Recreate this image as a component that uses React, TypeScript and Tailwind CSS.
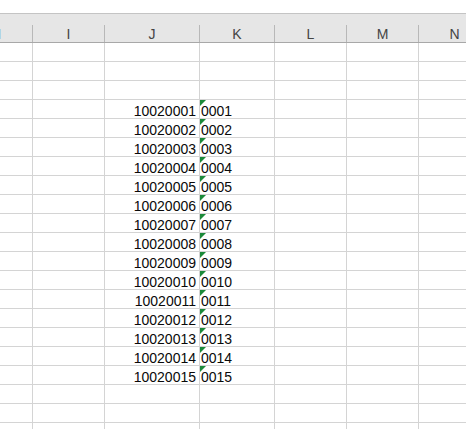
const COLS = [
  { key: 'H', w: 'w-[33px]' },
  { key: 'I', w: 'w-[72px]' },
  { key: 'J', w: 'w-[95px]' },
  { key: 'K', w: 'w-[75px]' },
  { key: 'L', w: 'w-[72px]' },
  { key: 'M', w: 'w-[72px]' },
  { key: 'N', w: 'w-[72px]' },
];

const ROW_COUNT = 21;
const DATA_START = 3;

function GreenFlag() {
  return (
    <svg width="6" height="6" viewBox="0 0 6 6" className="absolute left-0 top-0">
      <polygon points="0,0 6,0 0,6" fill="#1b8a3a" />
    </svg>
  );
}

function HeaderCell({ label, w, first }: { label: string; w: string; first?: boolean }) {
  return (
    <div className={`${w} shrink-0 h-full flex items-end overflow-hidden`}>
      <div
        className={`flex-1 leading-[14px] pb-[1px] text-[14px] text-[#444] ${first ? 'text-left -ml-[9px]' : 'text-center'}`}
      >
        {label}
      </div>
      <div className="w-px h-[17px] bg-[#b8b8b8] shrink-0" />
    </div>
  );
}

function Row({ index }: { index: number }) {
  const n = index - DATA_START + 1;
  const hasData = n >= 1 && n <= 15;
  const pad = String(n).padStart(2, '0');
  return (
    <div className="flex h-[19px] border-b border-[#d4d4d4] shrink-0">
      {COLS.map(c => (
        <div
          key={c.key}
          className={`${c.w} shrink-0 border-r border-[#d4d4d4] relative flex items-end overflow-hidden`}
        >
          {hasData && c.key === 'J' && (
            <div className="w-full text-right pr-[3px] leading-[14px] text-[14px] text-[#0a0a0a]">
              {`100200${pad}`}
            </div>
          )}
          {hasData && c.key === 'K' && (
            <>
              <GreenFlag />
              <div className="w-full pl-[1px] leading-[14px] text-[14px] text-[#0a0a0a]">{`00${pad}`}</div>
            </>
          )}
        </div>
      ))}
    </div>
  );
}

export default function App() {
  return (
    <div
      className="w-[466px] h-[429px] overflow-hidden bg-white flex flex-col"
      style={{ fontFamily: '"Liberation Sans", Arial, sans-serif' }}
    >
      <div className="h-[13px] shrink-0 bg-white" />
      <div className="h-[30px] shrink-0 bg-[#e6e6e6] border-t border-[#c4c4c4] border-b border-b-[#a8a8a8] flex">
        {COLS.map((c, i) => (
          <HeaderCell key={c.key} label={c.key} w={c.w} first={i === 0} />
        ))}
      </div>
      {Array.from({ length: ROW_COUNT }, (_, i) => (
        <Row key={i} index={i} />
      ))}
    </div>
  );
}
